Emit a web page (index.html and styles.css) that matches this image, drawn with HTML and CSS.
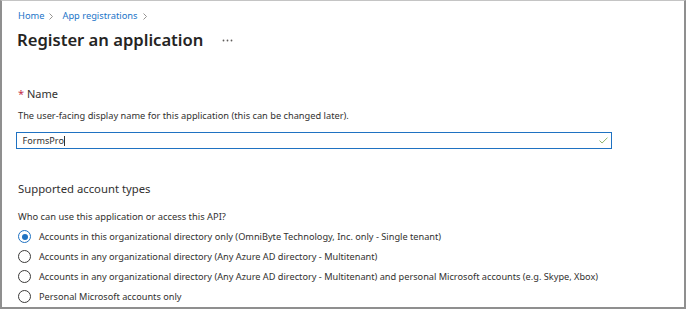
FILE: index.html
```html
<!DOCTYPE html>
<html>
<head>
<meta charset="utf-8">
<link rel="stylesheet" href="styles.css">
</head>
<body>
<div class="frame">
  <nav class="crumbs">
    <a class="crumb">Home</a>
    <svg class="chev" width="4" height="7" viewBox="0 0 4 7"><path d="M0.5 0.5 L3.5 3.5 L0.5 6.5" fill="none" stroke="#8a8886" stroke-width="0.9"/></svg>
    <a class="crumb">App registrations</a>
    <svg class="chev" width="4" height="7" viewBox="0 0 4 7"><path d="M0.5 0.5 L3.5 3.5 L0.5 6.5" fill="none" stroke="#8a8886" stroke-width="0.9"/></svg>
  </nav>
  <div class="title-row">
    <h1 class="title">Register an application</h1>
    <svg class="more" width="11" height="3" viewBox="0 0 11 3"><circle cx="1.5" cy="1.5" r="0.9" fill="#605e5c"/><circle cx="5.5" cy="1.5" r="0.9" fill="#605e5c"/><circle cx="9.5" cy="1.5" r="0.9" fill="#605e5c"/></svg>
  </div>

  <div class="field-label"><span class="req">*</span> Name</div>
  <div class="desc">The user-facing display name for this application (this can be changed later).</div>
  <div class="input">
    <span class="input-text">FormsPro</span><span class="caret"></span>
    <svg class="check" width="9" height="7" viewBox="0 0 9 7"><path d="M0.5 3.6 L3.1 6 L8.5 0.6" fill="none" stroke="#8db36b" stroke-width="1"/></svg>
  </div>

  <div class="section-title">Supported account types</div>
  <div class="question">Who can use this application or access this API?</div>
  <div class="radios">
    <div class="radio-row"><span class="radio checked"></span><span class="radio-label">Accounts in this organizational directory only (OmniByte Technology, Inc. only - Single tenant)</span></div>
    <div class="radio-row"><span class="radio"></span><span class="radio-label">Accounts in any organizational directory (Any Azure AD directory - Multitenant)</span></div>
    <div class="radio-row"><span class="radio"></span><span class="radio-label">Accounts in any organizational directory (Any Azure AD directory - Multitenant) and personal Microsoft accounts (e.g. Skype, Xbox)</span></div>
    <div class="radio-row"><span class="radio"></span><span class="radio-label">Personal Microsoft accounts only</span></div>
  </div>
</div>
</body>
</html>
```
FILE: styles.css
```css
html, body {
  margin: 0;
  padding: 0;
  background: #ffffff;
}
body {
  font-family: "Noto Sans", "Open Sans", sans-serif;
  color: #323130;
}
.frame {
  box-sizing: border-box;
  width: 686px;
  height: 309px;
  border: 2px solid #8f8f8f;
  border-top: 1px solid #c4c4c4;
  padding: 8px 0 0 14px;
  overflow: hidden;
  background: #fff;
}
.crumbs {
  display: flex;
  align-items: center;
  padding-left: 2px;
  font-size: 9.3px;
  line-height: 14px;
  height: 14px;
}
.crumb { color: #1b74c8; }
.chev { margin: 0 9px 0 5px; }
.title-row {
  display: flex;
  align-items: center;
  margin-top: 5px;
  height: 24px;
  padding-left: 1px;
}
.title {
  margin: 0;
  font-size: 16.6px;
  font-weight: 600;
  line-height: 24px;
  color: #252423;
}
.more {
  margin-left: 19px;
  margin-top: 1px;
}
.field-label {
  margin-top: 34px;
  padding-left: 2px;
  font-size: 11px;
  line-height: 16px;
  color: #323130;
}
.req { color: #c4314b; }
.desc {
  margin-top: 7px;
  padding-left: 2px;
  font-size: 9.25px;
  line-height: 13px;
}
.input {
  box-sizing: border-box;
  margin-top: 10px;
  width: 596px;
  height: 17px;
  border: 1.5px solid #1f72c2;
  display: flex;
  align-items: center;
  padding-left: 5.5px;
  padding-right: 3.5px;
  font-size: 9.1px;
}
.input-text { line-height: 13px; }
.caret {
  display: inline-block;
  width: 1px;
  height: 10px;
  background: #323130;
}
.check { margin-left: auto; }
.section-title {
  margin-top: 31.5px;
  padding-left: 2px;
  font-size: 11.3px;
  line-height: 16px;
}
.question {
  margin-top: 13.5px;
  padding-left: 2px;
  font-size: 9.35px;
  line-height: 13px;
}
.radios {
  margin-top: 6.5px;
  display: flex;
  flex-direction: column;
  gap: 6px;
}
.radio-row {
  display: flex;
  align-items: center;
  gap: 8px;
  height: 14px;
  padding-left: 2px;
}
.radio {
  box-sizing: border-box;
  width: 13px;
  height: 13px;
  border-radius: 50%;
  border: 1px solid #3b3a39;
  flex: none;
  position: relative;
}
.radio.checked {
  border-color: #1f72c2;
}
.radio.checked::after {
  content: "";
  position: absolute;
  left: 2.5px;
  top: 2.5px;
  width: 6px;
  height: 6px;
  border-radius: 50%;
  background: #1f72c2;
}
.radio-label {
  font-size: 9.2px;
  line-height: 13px;
}
```
